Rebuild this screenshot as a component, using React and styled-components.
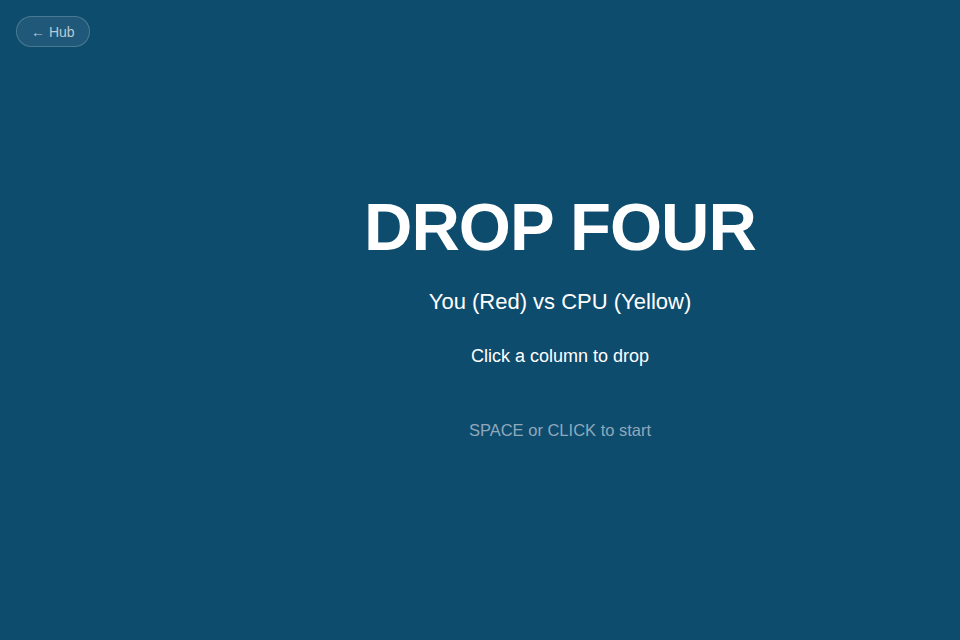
import styled, { createGlobalStyle } from "styled-components"

const Global = createGlobalStyle`
  html, body {
    margin: 0;
    padding: 0;
    background: #0e4c6e;
    font-family: "Liberation Sans", Arial, sans-serif;
  }
`;

const Screen = styled.div`
  position: relative;
  width: 960px;
  height: 640px;
  background: #0e4c6e;
  overflow: hidden;
`;

const HubButton = styled.button`
  position: absolute;
  top: 16px;
  left: 16px;
  height: 31px;
  padding: 0 14px;
  border-radius: 16px;
  border: 1px solid rgba(255, 255, 255, 0.2);
  background: rgba(255, 255, 255, 0.07);
  color: #b9cad6;
  font-family: inherit;
  font-size: 14px;
  cursor: pointer;
`;

const Intro = styled.div`
  height: 100%;
  box-sizing: border-box;
  padding: 189px 0 0 160px;
  display: flex;
  flex-direction: column;
  align-items: center;
  text-align: center;
`;

const Title = styled.h1`
  margin: 0;
  font-size: 67px;
  font-weight: 700;
  letter-spacing: -1px;
  line-height: 76px;
  color: #fff;
`;

const Line = styled.p`
  margin: ${p => p.$top}px 0 0;
  font-size: ${p => p.$size}px;
  line-height: 1.2;
  color: ${p => p.$muted ? "#8fa9bb" : "#fff"};
`;

export default function App() {
  return (
    <Screen>
      <Global />
      <HubButton>← Hub</HubButton>
      <Intro>
        <Title>DROP FOUR</Title>
        <Line $size={22} $top={24}>You (Red) vs CPU (Yellow)</Line>
        <Line $size={18} $top={31}>Click a column to drop</Line>
        <Line $size={16.5} $top={53} $muted>SPACE or CLICK to start</Line>
      </Intro>
    </Screen>
  )
}
